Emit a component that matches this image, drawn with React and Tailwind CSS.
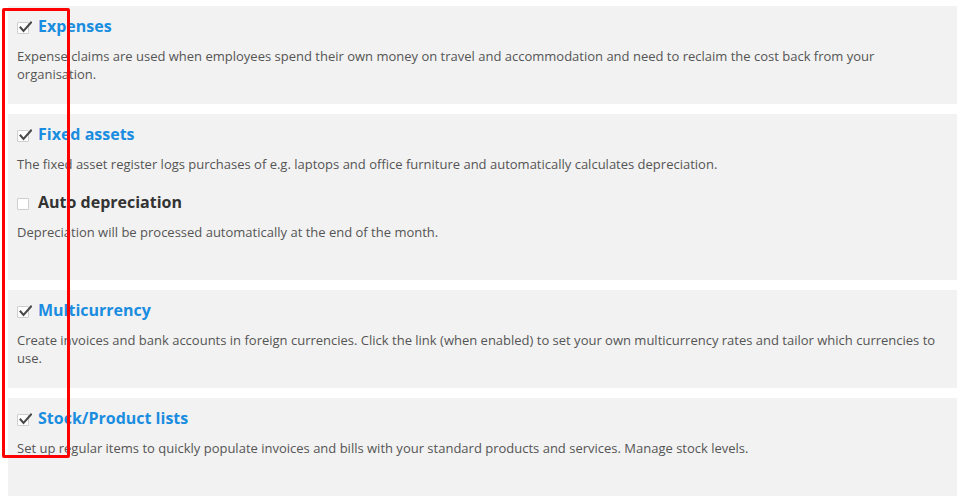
const sections = [
  [
    {
      title: 'Expenses',
      checked: true,
      text: 'Expense claims are used when employees spend their own money on travel and accommodation and need to reclaim the cost back from your organisation.',
    },
  ],
  [
    {
      title: 'Fixed assets',
      checked: true,
      text: 'The fixed asset register logs purchases of e.g. laptops and office furniture and automatically calculates depreciation.',
    },
    {
      title: 'Auto depreciation',
      checked: false,
      text: 'Depreciation will be processed automatically at the end of the month.',
    },
  ],
  [
    {
      title: 'Multicurrency',
      checked: true,
      text: 'Create invoices and bank accounts in foreign currencies. Click the link (when enabled) to set your own multicurrency rates and tailor which currencies to use.',
    },
  ],
  [
    {
      title: 'Stock/Product lists',
      checked: true,
      text: 'Set up regular items to quickly populate invoices and bills with your standard products and services. Manage stock levels.',
    },
  ],
]

const Checkbox = ({ checked }) => (
  <span className="relative mt-[6px] block w-[12px] h-[12px] shrink-0 border border-[#cfcfcf] bg-white rounded-[1px]">
    {checked && (
      <svg className="absolute left-[1px] top-[-2px] w-[13px] h-[13px]" viewBox="0 0 13 13" fill="none">
        <path d="M1.5 6.5 L4.5 10 L12 1.5" stroke="#4a4a4a" strokeWidth="2" strokeLinecap="square" />
      </svg>
    )}
  </span>
)

const Feature = ({ title, checked, text }) => (
  <div className="min-h-[68px]">
    <div className="flex items-start gap-[9px] h-[20px]">
      <Checkbox checked={checked} />
      <h3 className={`text-[16px] leading-[20px] font-bold ${title === 'Auto depreciation' ? 'text-[#333333]' : 'text-[#1a8de0]'}`}>
        {title}
      </h3>
    </div>
    <p className="mt-[11px] text-[13px] leading-[18px] text-[#555555]">{text}</p>
  </div>
)

export default function App() {
  return (
    <div className="relative min-h-[504px] bg-white pt-[6px] px-[8px] font-['Open_Sans',sans-serif]" style={{ width: 965 }}>
      <div className="w-[949px] flex flex-col gap-[10px]">
        {sections.map((items, i) => (
          <section key={i} className="bg-[#f2f2f2] pt-[10px] pb-[20px] px-[9px]">
            {items.map((item) => (
              <Feature key={item.title} {...item} />
            ))}
          </section>
        ))}
      </div>
      <div className="absolute left-[2px] top-[8px] w-[68px] h-[450px] border-[3px] border-[#ff0000] rounded-[2px]" />
    </div>
  )
}
